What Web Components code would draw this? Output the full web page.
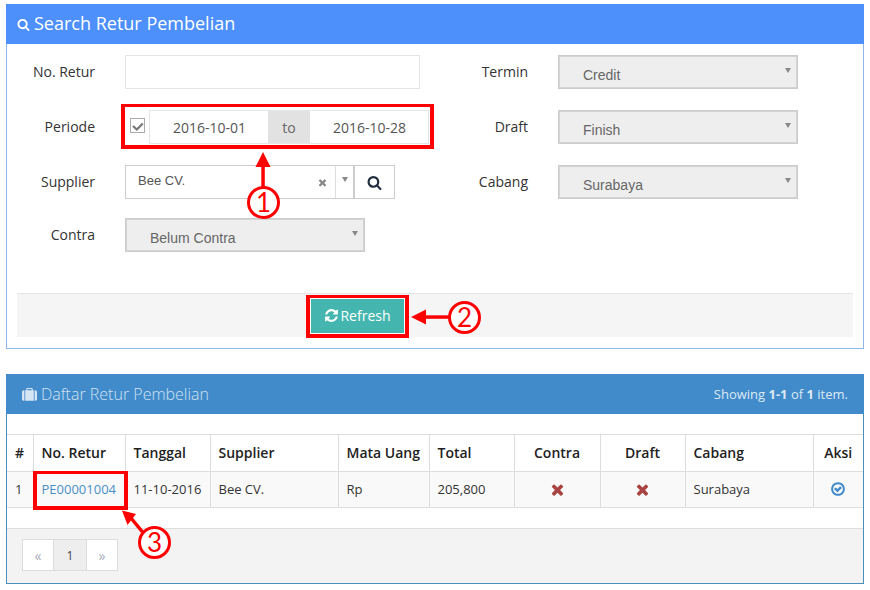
<!DOCTYPE html>
<html lang="id">
<head>
<meta charset="utf-8">
<title>Retur Pembelian</title>
<style>
  html, body { margin: 0; background: #fff; }
  body { position: relative; width: 870px; height: 590px; overflow: hidden; padding: 4px 6px 0; box-sizing: border-box; font-family: "Open Sans", sans-serif; color: #333; }
  .stack { display: flex; flex-direction: column; gap: 25px; }
  .bold { font-weight: 700; }
</style>
</head>
<body>
<div class="stack">
  <search-panel>
    <form-row-set>
      <form-field label="No. Retur" style="--field-width:295px"><text-box></text-box></form-field>
      <form-field label="Termin" side="right"><select-box value="Credit"></select-box></form-field>
      <form-field label="Periode" style="--field-width:305px"><date-range from="2016-10-01" to="2016-10-28"></date-range></form-field>
      <form-field label="Draft" side="right"><select-box value="Finish"></select-box></form-field>
      <form-field label="Supplier" style="--field-width:270px"><supplier-combo value="Bee CV."></supplier-combo></form-field>
      <form-field label="Cabang" side="right"><select-box value="Surabaya"></select-box></form-field>
      <form-field label="Contra" style="margin-top:-2px;align-self:start;height:34px"><select-box value="Belum Contra"></select-box></form-field>
    </form-row-set>
    <refresh-button slot="footer">Refresh</refresh-button>
  </search-panel>
  <list-panel>
    <span slot="summary">Showing <span class="bold">1-1</span> of <span class="bold">1</span> item.</span>
    <retur-table></retur-table>
    <page-nav slot="footer"></page-nav>
  </list-panel>
</div>

<mark-box style="left:121px;top:104px;width:313px;height:45px"></mark-box>
<mark-box style="left:306px;top:295px;width:103px;height:43px"></mark-box>
<mark-box style="left:33px;top:471px;width:95px;height:39px"></mark-box>
<callout-arrows></callout-arrows>
<callout-num style="left:247px;top:186px">1</callout-num>
<callout-num style="left:448px;top:301px">2</callout-num>
<callout-num style="left:138px;top:526px">3</callout-num>

<script>
// ikon font-awesome, digambar ulang sebagai svg (grid 1792)
const ICONS = {
  search: "M1216 832q0-185-131.5-316.5t-316.5-131.5-316.5 131.5-131.5 316.5 131.5 316.5 316.5 131.5 316.5-131.5 131.5-316.5zm512 832q0 52-38 90t-90 38q-54 0-90-38l-343-342q-179 124-399 124-143 0-273.5-55.5t-225-150-150-225-55.5-273.5 55.5-273.5 150-225 225-150 273.5-55.5 273.5 55.5 225 150 150 225 55.5 273.5q0 220-124 399l343 343q37 37 37 90z",
  remove: "M1490 1322q0 40-28 68l-136 136q-28 28-68 28t-68-28l-294-294-294 294q-28 28-68 28t-68-28l-136-136q-28-28-28-68t28-68l294-294-294-294q-28-28-28-68t28-68l136-136q28-28 68-28t68 28l294 294 294-294q28-28 68-28t68 28l136 136q28 28 28 68t-28 68l-294 294 294 294q28 28 28 68z",
  refresh: "M1639 1056q0 5-1 7-64 268-268 434.5t-478 166.5q-146 0-282.5-55t-243.5-157l-129 129q-19 19-45 19t-45-19-19-45v-448q0-26 19-45t45-19h448q26 0 45 19t19 45-19 45l-137 137q71 66 161 102t187 36q134 0 250-65t186-179q11-17 53-117 8-23 30-23h192q13 0 22.5 9.5t9.5 22.5zm25-800v448q0 26-19 45t-45 19h-448q-26 0-45-19t-19-45 19-45l138-138q-148-137-349-137-134 0-250 65t-186 179q-11 17-53 117-8 23-30 23h-199q-13 0-22.5-9.5t-9.5-22.5v-7q65-268 270-434.5t480-166.5q146 0 284 55.5t245 156.5l130-129q19-19 45-19t45 19 19 45z",
  suitcase: "M640 256h512v-128h-512v128zm-352 0v1280h-64q-92 0-158-66t-66-158v-832q0-92 66-158t158-66h64zm1120 0v1280h-1024v-1280h128v-160q0-40 28-68t68-28h576q40 0 68 28t28 68v160h128zm384 224v832q0 92-66 158t-158 66h-64v-1280h64q92 0 158 66t66 158z",
  circleCheck: "M1299 813l-422 422q-19 19-45 19t-45-19l-294-294q-19-19-19-45t19-45l102-102q19-19 45-19t45 19l147 147 275-275q19-19 45-19t45 19l102 102q19 19 19 45t-19 45zm141 83q0-148-73-273t-198-198-273-73-273 73-198 198-73 273 73 273 198 198 273 73 273-73 198-198 73-273zm224 0q0 209-103 385.5t-279.5 279.5-385.5 103-385.5-103-279.5-279.5-103-385.5 103-385.5 279.5-279.5 385.5-103 385.5 103 279.5 279.5 103 385.5z"
};
const icon = (name, size, color) =>
  `<svg width="${size}" height="${size}" viewBox="0 0 1792 1792" fill="${color}" style="display:block;flex:none"><path d="${ICONS[name]}"/></svg>`;

class SearchPanel extends HTMLElement {
  constructor() {
    super();
    this.attachShadow({ mode: "open" });
    this.shadowRoot.innerHTML = `
      <style>
        :host { display: block; box-sizing: border-box; height: 345px; border: 1px solid #8fb5ee; border-top: 0; background: #fff; }
        header { height: 40px; margin: 0 -1px; background: #4d8ffb; color: #fff; display: flex; align-items: center; gap: 4px; padding-left: 11px; font-size: 18px; }
        header span { position: relative; top: -1px; }
        .body { height: 249px; padding-top: 11px; box-sizing: border-box; }
        footer { margin: 0 10px; height: 44px; box-sizing: border-box; background: #f5f5f5; border-top: 1px solid #e5e5e5; display: flex; align-items: flex-start; padding: 4px 0 0 293px; }
      </style>
      <header>${icon("search", 13, "#fff")}<span>Search Retur Pembelian</span></header>
      <div class="body"><slot></slot></div>
      <footer><slot name="footer"></slot></footer>`;
  }
}

class ListPanel extends HTMLElement {
  constructor() {
    super();
    this.attachShadow({ mode: "open" });
    this.shadowRoot.innerHTML = `
      <style>
        :host { display: block; box-sizing: border-box; height: 210px; border: 1px solid #4a8fb8; border-top: 0; background: #fff; }
        header { height: 40px; margin: 0 -1px; background: #428bca; display: flex; align-items: center; padding: 0 16px; }
        .title { display: flex; align-items: center; gap: 4px; color: #cfe2f3; font-size: 16px; font-weight: 300; flex: 1; }
        .title svg { position: relative; top: 1px; }
        .summary { color: #dce9f5; font-size: 13px; }
        .body { padding-top: 20px; height: 114px; box-sizing: border-box; }
        footer { height: 55px; box-sizing: border-box; background: #f3f3f3; border-top: 1px solid #ddd; padding: 10px 15px; }
      </style>
      <header>
        <div class="title">${icon("suitcase", 15, "#d6e5f4")}<span>Daftar Retur Pembelian</span></div>
        <div class="summary"><slot name="summary"></slot></div>
      </header>
      <div class="body"><slot></slot></div>
      <footer><slot name="footer"></slot></footer>`;
  }
}

class FormRowSet extends HTMLElement {
  constructor() {
    super();
    this.attachShadow({ mode: "open" });
    this.shadowRoot.innerHTML = `
      <style>
        :host { display: grid; grid-template-columns: 450px 1fr; grid-auto-rows: 34px; row-gap: 21px; }
      </style>
      <slot></slot>`;
  }
}

class FormField extends HTMLElement {
  constructor() {
    super();
    this.attachShadow({ mode: "open" });
    const right = this.getAttribute("side") === "right";
    this.shadowRoot.innerHTML = `
      <style>
        :host { display: flex; align-items: center; font-size: 14px; color: #333; }
        label { width: ${right ? 71 : 88}px; text-align: right; flex: none; margin-right: 30px; position: relative; top: -1px; }
        .ctl { width: var(--field-width, 240px); height: 34px; flex: none; }
      </style>
      <label>${this.getAttribute("label")}</label>
      <div class="ctl"><slot></slot></div>`;
  }
}

class TextBox extends HTMLElement {
  constructor() {
    super();
    this.attachShadow({ mode: "open" });
    this.shadowRoot.innerHTML = `<style>:host { display: block; box-sizing: border-box; height: 34px; border: 1px solid #e5e5e5; background: #fff; }</style>`;
  }
}

class SelectBox extends HTMLElement {
  constructor() {
    super();
    this.attachShadow({ mode: "open" });
    this.shadowRoot.innerHTML = `
      <style>
        :host { display: flex; box-sizing: border-box; height: 34px; border: 1px solid #ccc; background: #eee; box-shadow: inset 0 0 0 1px #d4d4d4; position: relative; padding: 11px 0 0 24px; font: 14px "Liberation Sans", Arial, sans-serif; color: #666; }
        i { position: absolute; right: 6px; top: 12px; border: 3.5px solid transparent; border-top: 5px solid #888; border-bottom: 0; }
      </style>
      <span>${this.getAttribute("value")}</span><i></i>`;
  }
}

class DateRange extends HTMLElement {
  constructor() {
    super();
    this.attachShadow({ mode: "open" });
    this.shadowRoot.innerHTML = `
      <style>
        :host { display: flex; align-items: stretch; height: 34px; font-size: 14px; color: #555; }
        .chk { width: 15px; height: 15px; box-sizing: border-box; border: 1px solid #aaa; margin: 8px 4px 0 5px; flex: none; background: #fff; }
        .chk svg { display: block; }
        .wrap { display: flex; border: 1px solid #e5e5e5; box-sizing: border-box; }
        .date { width: 118px; display: flex; align-items: center; justify-content: center; background: #fff; padding: 1px 0 0 1px; box-sizing: border-box; }
        .to { width: 42px; background: #e2e2e2; display: flex; align-items: center; justify-content: center; color: #666; }
      </style>
      <div class="chk"><svg width="13" height="13" viewBox="0 0 13 13"><path d="M2 7l3.800 3.500 6-6" fill="none" stroke="#777" stroke-width="2.200"/></svg></div>
      <div class="wrap">
        <div class="date">${this.getAttribute("from")}</div>
        <div class="to">to</div>
        <div class="date">${this.getAttribute("to")}</div>
      </div>`;
  }
}

class SupplierCombo extends HTMLElement {
  constructor() {
    super();
    this.attachShadow({ mode: "open" });
    this.shadowRoot.innerHTML = `
      <style>
        :host { display: flex; height: 34px; font: 13px "Liberation Sans", Arial, sans-serif; color: #555; }
        .box { width: 229px; flex: none; box-sizing: border-box; border: 1px solid #ccc; display: flex; align-items: stretch; background: #fff; }
        .val { flex: 1; padding: 7px 0 0 12px; }
        .clear { width: 18px; display: flex; align-items: center; }
        .drop { width: 18px; box-sizing: border-box; border-left: 1px solid #ddd; position: relative; }
        .drop i { position: absolute; left: 6px; top: 11px; border: 3px solid transparent; border-width: 5px 3px 0; border-top-color: #888; }
        .btn { width: 41px; flex: none; box-sizing: border-box; border: 1px solid #ccc; display: flex; align-items: center; justify-content: center; background: #fff; }
      </style>
      <div class="box">
        <div class="val">${this.getAttribute("value")}</div>
        <div class="clear">${icon("remove", 11, "#888")}</div>
        <div class="drop"><i></i></div>
      </div>
      <div class="btn">${icon("search", 15, "#1f2d3d")}</div>`;
  }
}

class RefreshButton extends HTMLElement {
  constructor() {
    super();
    this.attachShadow({ mode: "open" });
    this.shadowRoot.innerHTML = `
      <style>
        :host { display: flex; align-items: center; justify-content: center; gap: 1px; box-sizing: border-box; width: 95px; height: 36px; padding-bottom: 2px; border: 1px solid #fff; background: #45b6af; color: #fff; font-size: 14px; }
      </style>
      ${icon("refresh", 15, "#fff")}<slot></slot>`;
  }
}

class ReturTable extends HTMLElement {
  constructor() {
    super();
    this.attachShadow({ mode: "open" });
    const widths = [26, 92, 85, 128, 91, 85, 86, 85, 128, 50];
    const cross = icon("remove", 17, "#a94442");
    this.shadowRoot.innerHTML = `
      <style>
        :host { display: block; font-size: 13px; color: #333; }
        table { border-collapse: collapse; table-layout: fixed; width: 856px; }
        th, td { border: 1px solid #ddd; border-left: 0; padding: 0 8px; text-align: left; white-space: nowrap; }
        th:last-child, td:last-child { border-right: 0; }
        th { height: 37px; box-sizing: border-box; padding-bottom: 2px; font-size: 14px; font-weight: 600; color: #222; }
        td { height: 36px; box-sizing: border-box; padding-bottom: 1px; background: #f9f9f9; }
        .c { text-align: center; }
        .c svg { margin: 0 auto; }
        a { color: #4a90c8; text-decoration: none; }
      </style>
      <table>
        <colgroup>${widths.map(w => `<col style="width:${w}px">`).join("")}</colgroup>
        <thead><tr>
          <th>#</th><th>No. Retur</th><th>Tanggal</th><th>Supplier</th><th>Mata Uang</th><th>Total</th>
          <th class="c">Contra</th><th class="c">Draft</th><th>Cabang</th><th class="c">Aksi</th>
        </tr></thead>
        <tbody><tr>
          <td>1</td><td><a>PE00001004</a></td><td>11-10-2016</td><td>Bee CV.</td><td>Rp</td><td>205,800</td>
          <td class="c">${cross}</td><td class="c">${cross}</td><td>Surabaya</td>
          <td class="c">${icon("circleCheck", 16, "#428bca")}</td>
        </tr></tbody>
      </table>`;
  }
}

class PageNav extends HTMLElement {
  constructor() {
    super();
    this.attachShadow({ mode: "open" });
    this.shadowRoot.innerHTML = `
      <style>
        :host { display: inline-flex; height: 32px; box-sizing: border-box; border: 1px solid #ddd; background: #fff; font-size: 12px; }
        span { width: 30px; display: flex; align-items: center; justify-content: center; color: #a5adb8; font-size: 14px; }
        .on { width: 34px; box-sizing: border-box; background: #eee; color: #444; font-size: 12px; border: solid #ddd; border-width: 0 1px; }
      </style>
      <span>«</span><span class="on">1</span><span>»</span>`;
  }
}

// anotasi merah di atas screenshot
class MarkBox extends HTMLElement {
  constructor() {
    super();
    this.attachShadow({ mode: "open" });
    this.shadowRoot.innerHTML = `<style>:host { position: absolute; box-sizing: border-box; border: 4px solid #f00; border-top-width: 3px; pointer-events: none; }</style>`;
  }
}

class CalloutNum extends HTMLElement {
  constructor() {
    super();
    this.attachShadow({ mode: "open" });
    this.shadowRoot.innerHTML = `
      <style>
        :host { position: absolute; box-sizing: border-box; width: 33px; height: 33px; border: 3px solid #f00; border-radius: 50%; background: #fff; color: #f00; font: 26px/27px Lato, sans-serif; text-align: center; }
      </style>
      <slot></slot>`;
  }
}

class CalloutArrows extends HTMLElement {
  constructor() {
    super();
    this.attachShadow({ mode: "open" });
    this.shadowRoot.innerHTML = `
      <style>:host { position: absolute; left: 0; top: 0; width: 870px; height: 590px; pointer-events: none; }</style>
      <svg width="870" height="590" fill="#f00" stroke="none">
        <rect x="261.300" y="165" width="3.500" height="24"/>
        <path d="M263 152l7.500 15h-15z"/>
        <rect x="425" y="315.300" width="25" height="3.500"/>
        <path d="M411 317l15-7.500v15z"/>
        <path d="M131 518l11.500 14" stroke="#f00" stroke-width="3.500"/>
        <path d="M122 510.500l14 3.500-8.500 11z"/>
      </svg>`;
  }
}

customElements.define("search-panel", SearchPanel);
customElements.define("list-panel", ListPanel);
customElements.define("form-row-set", FormRowSet);
customElements.define("form-field", FormField);
customElements.define("text-box", TextBox);
customElements.define("select-box", SelectBox);
customElements.define("date-range", DateRange);
customElements.define("supplier-combo", SupplierCombo);
customElements.define("refresh-button", RefreshButton);
customElements.define("retur-table", ReturTable);
customElements.define("page-nav", PageNav);
customElements.define("mark-box", MarkBox);
customElements.define("callout-num", CalloutNum);
customElements.define("callout-arrows", CalloutArrows);
</script>
</body>
</html>
